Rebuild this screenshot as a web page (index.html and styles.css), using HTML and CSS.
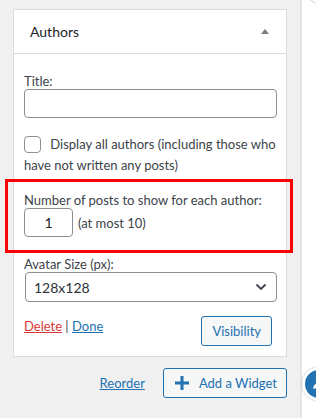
FILE: index.html
```html
<!DOCTYPE html>
<html lang="en">

<head>
    <meta charset="UTF-8">
    <meta name="viewport" content="width=device-width, initial-scale=1.0">
    <title>Widgets</title>
    <link rel="stylesheet" href="styles.css">
</head>

<body>
    <div class="page">
        <div class="sidebar">
            <div class="widget">
                <div class="widget-top">
                    <span class="widget-title">Authors</span>
                    <span class="arrow"></span>
                </div>
                <div class="widget-inside">
                    <label class="label">Title:</label>
                    <input type="text" class="text-input">

                    <div class="check-row">
                        <span class="checkbox"></span>
                        Display all authors (including those who have not written any posts)
                    </div>

                    <label class="label label-num">Number of posts to show for each author:</label>
                    <div class="num-row">
                        <span class="num-input">1</span>
                        <span class="num-note">(at most 10)</span>
                    </div>

                    <label class="label label-avatar">Avatar Size (px):</label>
                    <div class="select">
                        <span>128x128</span>
                        <svg width="12" height="8" viewBox="0 0 12 8">
                            <path d="M1.5 1.5 L6 6 L10.5 1.5" fill="none" stroke="#3c434a" stroke-width="1.8" />
                        </svg>
                    </div>

                    <div class="actions">
                        <div class="links">
                            <a class="delete">Delete</a> | <a class="done">Done</a>
                        </div>
                        <button class="visibility">Visibility</button>
                    </div>
                </div>
            </div>

            <div class="bottom-row">
                <a class="reorder">Reorder</a>
                <button class="add-widget">
                    <svg width="14" height="14" viewBox="0 0 14 14">
                        <path d="M7 0 V14 M0 7 H14" stroke="#2271b1" stroke-width="3" />
                    </svg>
                    Add a Widget
                </button>
            </div>
        </div>
        <div class="side-panel"></div>

        <!-- annotation + overlays -->
        <div class="highlight"></div>
        <div class="arc"></div>
        <div class="edit-bubble">
            <svg width="14" height="14" viewBox="0 0 14 14">
                <path d="M2 12 L3 8.5 L9.5 2 L12 4.5 L5.5 11 Z" fill="#fff" />
            </svg>
        </div>
    </div>
</body>

</html>
```

FILE: styles.css
```css
body {
    margin: 0;
    font-family: Lato, "Noto Sans", sans-serif;
    font-size: 13px;
    color: #3c434a;
}

.page {
    position: relative;
    display: flex;
    width: 316px;
    height: 418px;
    overflow: hidden;
    background: #f0f0f1;
}

.sidebar {
    width: 274px;
    padding: 9px 13px 0 13px;
}

.side-panel {
    flex: 1;
    background: #fff;
    border-left: 2px solid #e4e4e6;
}

.widget {
    background: #fff;
    border: 1px solid #dcdcde;
}

.widget-top {
    height: 43px;
    display: flex;
    align-items: center;
    justify-content: space-between;
    padding: 0 17px 0 16px;
    border-bottom: 1px solid #dcdcde;
}

.widget-title {
    font-size: 14px;
    color: #1d2327;
}

.arrow {
    width: 0;
    height: 0;
    border-left: 4px solid transparent;
    border-right: 4px solid transparent;
    border-bottom: 5px solid #787c82;
}

.widget-inside {
    padding: 19px 9px 10px 10px;
}

.label {
    display: block;
    line-height: 16px;
}

.text-input {
    display: block;
    box-sizing: border-box;
    width: 100%;
    height: 29px;
    margin: 0;
    border: 1px solid #8c8f94;
    border-radius: 4px;
}

.check-row {
    margin-top: 16px;
    line-height: 21px;
}

.checkbox {
    display: inline-block;
    vertical-align: -4px;
    box-sizing: border-box;
    width: 17px;
    height: 17px;
    margin-right: 6px;
    border: 1px solid #8c8f94;
    border-radius: 4px;
}

.label-num {
    margin-top: 16px;
}

.num-row {
    display: flex;
    align-items: center;
    gap: 5px;
}

.num-input {
    box-sizing: border-box;
    width: 49px;
    height: 29px;
    border: 1px solid #8c8f94;
    border-radius: 4px;
    display: flex;
    align-items: center;
    justify-content: center;
    color: #1d2327;
    font-size: 14px;
}

.label-avatar {
    margin-top: 19px;
}

.select {
    box-sizing: border-box;
    height: 30px;
    margin-left: 1px;
    border: 1px solid #8c8f94;
    border-radius: 4px;
    display: flex;
    align-items: center;
    justify-content: space-between;
    padding: 0 9px 0 8px;
    font-size: 14px;
    color: #2c3338;
}

.actions {
    display: flex;
    justify-content: space-between;
    align-items: flex-start;
    margin-top: 13px;
    padding-right: 5px;
}

.links {
    line-height: 20px;
    margin-top: 1px;
}

.delete {
    color: #d63638;
    text-decoration: underline;
}

.done {
    color: #2271b1;
    text-decoration: underline;
}

.visibility {
    height: 30px;
    padding: 0 10px;
    margin-top: 1px;
    border: 1px solid #2271b1;
    border-radius: 3px;
    background: #f6f7f7;
    color: #2271b1;
    font-family: inherit;
    font-size: 13px;
}

.bottom-row {
    display: flex;
    justify-content: flex-end;
    align-items: center;
    gap: 18px;
    margin-top: 11px;
}

.reorder {
    color: #2271b1;
    text-decoration: underline;
}

.add-widget {
    display: flex;
    align-items: center;
    gap: 10px;
    height: 30px;
    padding: 0 9px 0 11px;
    border: 1px solid #2271b1;
    border-radius: 3px;
    background: #f6f7f7;
    color: #2271b1;
    font-family: inherit;
    font-size: 13px;
}

.highlight {
    position: absolute;
    left: 5px;
    top: 179px;
    width: 282px;
    height: 68px;
    border: 3px solid #f00;
}

.arc {
    position: absolute;
    left: 302px;
    top: -40px;
    width: 60px;
    height: 46px;
    border: 1px solid #dcdcde;
    border-radius: 50%;
}

.edit-bubble {
    position: absolute;
    left: 302px;
    top: 367px;
    width: 22px;
    height: 28px;
    border-radius: 50%;
    background: #2271b1;
    border: 3px solid #fff;
    box-shadow: 0 0 2px rgba(0, 0, 0, 0.3);
    display: flex;
    align-items: center;
    padding-left: 6px;
}
```
